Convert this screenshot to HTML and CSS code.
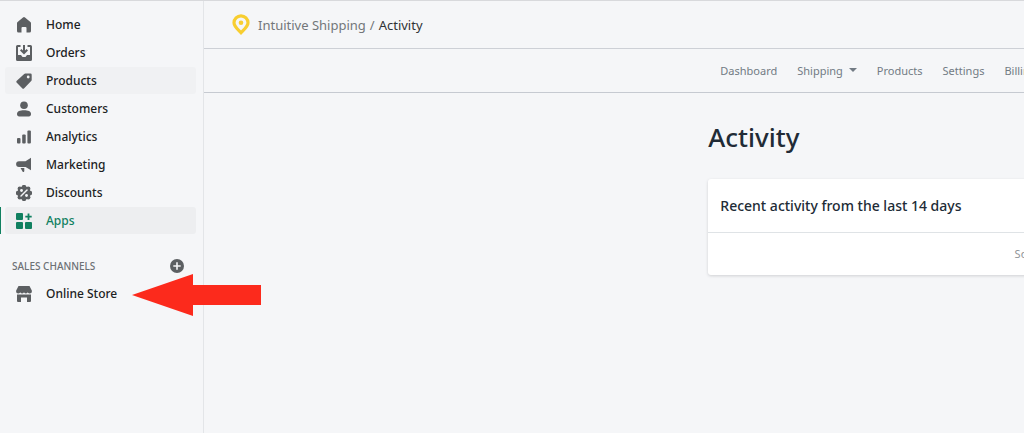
FILE: index.html
```html
<!DOCTYPE html>
<html lang="en">

<head>
    <meta charset="UTF-8">
    <meta name="viewport" content="width=device-width, initial-scale=1.0">
    <title>Intuitive Shipping - Activity</title>
    <link rel="stylesheet" href="styles.css">
</head>

<body>
    <aside class="sidebar">
        <nav class="side-nav">
            <a href="#" class="side-link">
                <svg class="icon" viewBox="0 0 16 16"><path d="M7 .5a1.600 1.600 0 0 1 2 0l5.400 4.500a1.800 1.800 0 0 1 .6 1.400v7.600a1.500 1.500 0 0 1-1.500 1.500H10.500v-4.500a1 1 0 0 0-1-1h-3a1 1 0 0 0-1 1v4.500h-3A1.500 1.500 0 0 1 1 14V6.400a1.800 1.800 0 0 1 .6-1.400z"/></svg>
                Home
            </a>
            <a href="#" class="side-link">
                <svg class="icon" viewBox="0 0 16 16"><path d="M1.500 0h3v2H2v8h3l1.500 2h3L11 10h3V2h-2.500V0h3A1.500 1.500 0 0 1 16 1.500v13a1.500 1.500 0 0 1-1.500 1.500h-13A1.500 1.500 0 0 1 0 14.500v-13A1.500 1.500 0 0 1 1.500 0z"/><path d="M7 0h2v5.600l1.600-1.600L12 5.400l-4 4-4-4L5.400 4 7 5.600z"/></svg>
                Orders
            </a>
            <a href="#" class="side-link hovered">
                <svg class="icon" viewBox="0 0 16 16"><path fill-rule="evenodd" d="M9.300.5h5.200a1.200 1.200 0 0 1 1.200 1.200v5.200a1.600 1.600 0 0 1-.5 1.100L8.200 15.200a1.400 1.400 0 0 1-2 0L.8 9.800a1.400 1.400 0 0 1 0-2L8.200 1a1.600 1.600 0 0 1 1.100-.5zM12.200 2.600a1.400 1.400 0 1 0 0 2.800 1.400 1.400 0 0 0 0-2.800z"/></svg>
                Products
            </a>
            <a href="#" class="side-link">
                <svg class="icon" viewBox="0 0 16 16"><circle cx="8" cy="4.300" r="3.800"/><path d="M1 13c0-2.800 3-3.800 7-3.800s7 1 7 3.800c0 1.500-.8 2.500-2.200 2.500H3.200C1.800 15.500 1 14.500 1 13z"/></svg>
                Customers
            </a>
            <a href="#" class="side-link">
                <svg class="icon" viewBox="0 0 16 16"><rect x="1" y="9" width="3.500" height="5.500" rx="1"/><rect x="6.200" y="5.500" width="3.500" height="9" rx="1"/><rect x="11.400" y="1.500" width="3.500" height="13" rx="1"/></svg>
                Analytics
            </a>
            <a href="#" class="side-link">
                <svg class="icon" viewBox="0 0 16 16"><path d="M15 .8v12.400L9.600 10H3a2.800 2.800 0 0 1 0-5.800h6.500z"/><path d="M4.500 11h3.800v3a1 1 0 0 1-1.600.8z"/></svg>
                Marketing
            </a>
            <a href="#" class="side-link">
                <svg class="icon" viewBox="0 0 16 16"><circle cx="8" cy="8" r="6.700"/><circle cx="8" cy="2" r="2.200"/><circle cx="12.200" cy="3.800" r="2.200"/><circle cx="14" cy="8" r="2.200"/><circle cx="12.200" cy="12.200" r="2.200"/><circle cx="8" cy="14" r="2.200"/><circle cx="3.800" cy="12.200" r="2.200"/><circle cx="2" cy="8" r="2.200"/><circle cx="3.800" cy="3.800" r="2.200"/><path class="cutout" d="M5 11l6-6"/><circle class="cutout-dot" cx="5.500" cy="5.500" r="1.400"/><circle class="cutout-dot" cx="10.500" cy="10.500" r="1.400"/></svg>
                Discounts
            </a>
            <a href="#" class="side-link active" aria-current="page">
                <svg class="icon" viewBox="0 0 16 16"><rect width="7" height="7" rx="1"/><rect y="9" width="7" height="7" rx="1"/><rect x="9" y="9" width="7" height="7" rx="1"/><path d="M11.600.5h1.800v2.300h2.300v1.800h-2.300v2.300h-1.800V4.600H9.300V2.800h2.300z"/></svg>
                Apps
            </a>
        </nav>

        <div class="section-title">
            <h2>SALES CHANNELS</h2>
            <button type="button" class="add-button" aria-label="Add sales channel">
                <svg viewBox="0 0 14 14"><circle cx="7" cy="7" r="7"/><path d="M7 3.300v7.400M3.300 7h7.400"/></svg>
            </button>
        </div>

        <a href="#" class="side-link">
            <svg class="icon" viewBox="0 0 16 16"><path d="M2.500 0h11l2.300 4.500c.4 1.700-.6 3-2.100 3-1.200 0-1.900-.8-1.900-1.500 0 .7-.8 1.500-1.900 1.500S8 6.700 8 6c0 .7-.8 1.500-1.900 1.500S4.200 6.700 4.200 6c0 .7-.7 1.500-1.900 1.500-1.500 0-2.500-1.300-2.100-3z"/><path d="M1 8.500h14V15a1 1 0 0 1-1 1h-3v-4.500H5V16H2a1 1 0 0 1-1-1z"/></svg>
            Online Store
        </a>

        <svg class="arrow" viewBox="0 0 130 42"><path d="M0 21L61 0v11h68v20H61v11z"/></svg>
    </aside>

    <main class="main">
        <header class="topbar">
            <svg class="pin" viewBox="0 0 18 21"><path d="M9 1.800a7 7 0 0 0-7 7c0 3.900 4 6.700 7 9.900 3-3.200 7-6 7-9.900a7 7 0 0 0-7-7z"/><circle cx="9" cy="8.800" r="2.300"/></svg>
            <a href="#">Intuitive Shipping</a>
            <span class="slash">/</span>
            <span class="current">Activity</span>
        </header>

        <nav class="app-nav">
            <div class="container">
                <a href="#">Dashboard</a>
                <a href="#" class="dropdown">Shipping</a>
                <a href="#">Products</a>
                <a href="#">Settings</a>
                <a href="#">Billing</a>
            </div>
        </nav>

        <section class="container">
            <h1>Activity</h1>
            <div class="card">
                <h3 class="card-header">Recent activity from the last 14 days</h3>
                <p class="card-body">Sorry</p>
            </div>
        </section>
    </main>
</body>

</html>
```

FILE: styles.css
```css
* {
    box-sizing: border-box;
}

body {
    margin: 0;
    min-height: 100vh;
    display: flex;
    background-color: #f5f6f8;
    border-top: 1px solid #d8d9dc;
    font-family: 'Segoe UI', 'Noto Sans', sans-serif;
    font-size: 12px;
    color: #202223;
    overflow: hidden;
}

a {
    color: inherit;
    text-decoration: none;
}

h1,
h2,
h3,
p {
    margin: 0;
}

.sidebar {
    position: relative;
    flex: 0 0 204px;
    padding: 10px 7px 0 5px;
    border-right: 1px solid #e3e5e8;
}

.side-nav {
    display: flex;
    flex-direction: column;
    gap: 1px;
}

.side-link {
    position: relative;
    display: flex;
    align-items: center;
    gap: 14px;
    height: 27px;
    padding-left: 11px;
    border-radius: 3px;
    font-weight: 500;
}

.icon {
    width: 16px;
    height: 16px;
    fill: #5c5f62;
}

.hovered {
    background-color: #f0f1f3;
}

.active {
    background-color: #edeef0;
    color: #108060;
}

.active .icon {
    fill: #108060;
}

.active::before {
    content: '';
    position: absolute;
    left: -5px;
    top: 0;
    bottom: 0;
    width: 1px;
    background-color: #108060;
}

.cutout {
    stroke: #f5f6f8;
    stroke-width: 1.5;
    stroke-linecap: round;
}

.cutout-dot {
    fill: #f5f6f8;
}

.section-title {
    display: flex;
    align-items: center;
    justify-content: space-between;
    height: 28px;
    margin-top: 18px;
    padding: 0 12px 0 7px;
}

.section-title h2 {
    font-size: 10px;
    font-weight: 500;
    color: #6d7175;
}

.add-button {
    display: flex;
    padding: 0;
    border: none;
    background: none;
    cursor: pointer;
}

.add-button svg {
    width: 14px;
    height: 14px;
    fill: #5c5f62;
}

.add-button path {
    stroke: #f5f6f8;
    stroke-width: 1.6;
}

.arrow {
    position: absolute;
    left: 132px;
    top: 273px;
    width: 130px;
    height: 42px;
    fill: #fc2a1c;
    z-index: 1;
}

.main {
    flex: 1;
    min-width: 0;
    overflow: hidden;
}

.topbar {
    display: flex;
    align-items: center;
    height: 48px;
    padding-left: 28px;
    border-bottom: 1px solid #cdd0d6;
    font-size: 13px;
    color: #73767a;
}

.pin {
    width: 18px;
    height: 21px;
    margin-right: 8px;
    fill: none;
    stroke: #f8ce30;
    stroke-width: 3.2;
}

.pin circle {
    fill: #f8ce30;
    stroke: none;
}

.slash {
    margin: 0 4px;
}

.current {
    color: #303336;
}

.container {
    width: 640px;
    margin-left: 61.5%;
}

.app-nav {
    border-bottom: 1px solid #c6cad1;
    font-size: 11px;
    color: #727b84;
}

.app-nav .container {
    display: flex;
    align-items: center;
    gap: 20px;
    height: 43px;
    padding-left: 12px;
}

.dropdown::after {
    content: '';
    display: inline-block;
    margin-left: 6px;
    vertical-align: 3px;
    border-top: 4px solid;
    border-left: 4px solid transparent;
    border-right: 4px solid transparent;
}

h1 {
    margin: 26px 0 24px;
    font-size: 26px;
    font-weight: 500;
    line-height: 36px;
    color: #212b36;
}

.card {
    background-color: #fff;
    border-radius: 3px;
    box-shadow: 0 1px 3px rgba(63, 63, 68, 0.2);
}

.card-header {
    padding: 16px 12px;
    border-bottom: 1px solid #dfe3e6;
    font-size: 14px;
    font-weight: 500;
    line-height: 21px;
    color: #212b36;
}

.card-body {
    padding: 12px;
    font-size: 11px;
    line-height: 18px;
    text-align: center;
    color: #919498;
}
```
